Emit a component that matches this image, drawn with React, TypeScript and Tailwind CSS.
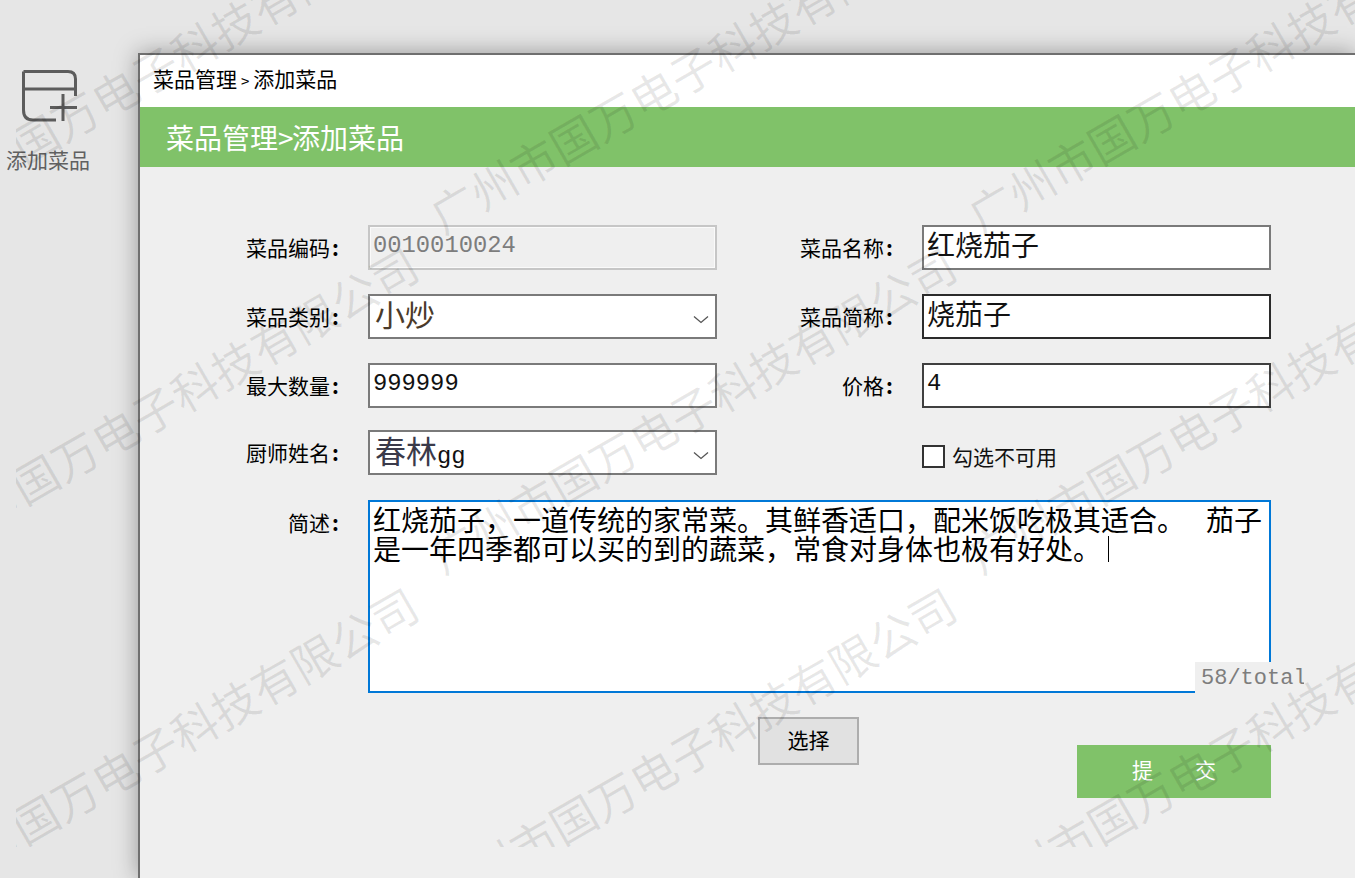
import type { ReactNode } from "react";

const watermarkRows = [-145, 195, 535, 875];
const watermarkCols = [-121, 417, 955];

function Watermark() {
  return (
    <div className="absolute left-[16px] top-0 z-50 h-[847px] w-[1339px] overflow-hidden pointer-events-none">
      {watermarkRows.map((top) =>
        watermarkCols.map((left) => (
          <div
            key={`${top}-${left}`}
            className="absolute origin-left -rotate-30 whitespace-nowrap text-[46px] leading-[46px] text-black/[0.09]"
            style={{ top, left }}
          >
            广州市国万电子科技有限公司
          </div>
        ))
      )}
    </div>
  );
}

function Mono({ children }: { children: ReactNode }) {
  return <div className="font-['Liberation_Mono',monospace] text-[23.8px] leading-[38px]">{children}</div>;
}

function Chevron() {
  return (
    <svg width="16" height="9" viewBox="0 0 16 9" fill="none" className="absolute right-[6px] top-[19px]">
      <path d="M1 1.5 L8 7.5 L15 1.5" stroke="#555" strokeWidth="1.3" />
    </svg>
  );
}

function Label({ children, width }: { children?: ReactNode; width: string }) {
  return (
    <div className={`${width} shrink-0 pr-[27px] pt-[4px] text-right text-[21px] leading-[36px] text-black`}>
      {children}
      {children && <span className="inline-block w-[11px] text-center font-bold">:</span>}
    </div>
  );
}

function Field({ children, border, select }: { children: ReactNode; border: string; select?: boolean }) {
  return (
    <div className={`relative h-[45px] w-[349px] shrink-0 overflow-hidden border-2 bg-white pl-[3px] text-[28px] leading-[35px] text-[#111] ${border}`}>
      {children}
      {select && <Chevron />}
    </div>
  );
}

export default function App() {
  return (
    <div className="relative flex h-[878px] w-[1355px] overflow-hidden bg-[#e6e6e6] font-['Noto_Sans_CJK_SC',sans-serif]">
      {/* left menu */}
      <div className="flex w-[138px] shrink-0 flex-col items-start pt-[68px]">
        <svg width="60" height="56" viewBox="0 0 60 56" fill="none" stroke="#5c5c5c" strokeWidth="3" className="ml-[20px]">
          <path d="M3.5 3.5 H48 Q55.5 3.5 55.5 11 V28" />
          <path d="M3.5 3.5 V42 Q3.5 52 13 52 H36" />
          <path d="M3.5 21 H55.5" />
          <path d="M30 39.5 H57" />
          <path d="M43 26 V53" />
        </svg>
        <div className="ml-[6px] mt-[20px] text-[21px] leading-[30px] text-[#606060]">添加菜品</div>
      </div>

      {/* dialog */}
      <div className="mt-[53px] flex min-w-0 flex-1 flex-col border-l-2 border-t-2 border-[#6f6f6f] bg-[#efefef] shadow-[0_0_22px_rgba(0,0,0,0.35)]">
        <div className="h-[52px] bg-white pl-[13px] pt-[8px] text-[21px] leading-[30px] text-black">
          菜品管理<span className="mx-[4px] text-[15px]">&gt;</span>添加菜品
        </div>
        <div className="h-[60px] bg-[#80c269] pl-[26px] pt-[10px] text-[28px] leading-[40px] text-white">
          菜品管理<span className="inline-block w-[14px]">&gt;</span>添加菜品
        </div>

        <div className="flex flex-col pt-[58px]">
          <div className="flex">
            <Label width="w-[228px]">菜品编码</Label>
            <div className="h-[45px] w-[349px] shrink-0 border-2 border-[#c6c6c6] bg-[#efefef] pl-[3px] text-[#7d7d7d] shadow-[inset_0_0_0_1px_#fafafa]">
              <Mono>0010010024</Mono>
            </div>
            <Label width="w-[205px]">菜品名称</Label>
            <Field border="border-[#7a7a7a]">红烧茄子</Field>
          </div>

          <div className="mt-[24px] flex">
            <Label width="w-[228px]">菜品类别</Label>
            <Field border="border-[#7a7a7a]" select>
              <span className="ml-[2px] text-[30px] text-[#4a3a2a]">小炒</span>
            </Field>
            <Label width="w-[205px]">菜品简称</Label>
            <Field border="border-[#2b2b2b]">烧茄子</Field>
          </div>

          <div className="mt-[24px] flex">
            <Label width="w-[228px]">最大数量</Label>
            <Field border="border-[#7a7a7a]">
              <Mono>999999</Mono>
            </Field>
            <Label width="w-[205px]">价格</Label>
            <Field border="border-[#404040]">
              <Mono>4</Mono>
            </Field>
          </div>

          <div className="mt-[22px] flex">
            <Label width="w-[228px]">厨师姓名</Label>
            <Field border="border-[#7a7a7a]" select>
              <span className="ml-[2px] text-[31px] text-[#3a3a4a]">春林</span>
              <span className="font-['Liberation_Mono',monospace] text-[23.8px]">gg</span>
            </Field>
            <Label width="w-[205px]" />
            <div className="flex items-center pt-[7px]">
              <div className="h-[23px] w-[23px] border-2 border-[#333] bg-white" />
              <span className="ml-[7px] text-[21px] leading-[30px] text-[#111]">勾选不可用</span>
            </div>
          </div>

          <div className="mt-[25px] flex">
            <Label width="w-[228px]">简述</Label>
            <div className="relative h-[193px] w-[903px] shrink-0 border-2 border-[#0078d7] bg-white pl-[3px] pt-[3px] text-[28px] leading-[29px] text-black">
              <div className="whitespace-nowrap">
                红烧茄子，一道传统的家常菜。其鲜香适口，配米饭吃极其适合。<span className="ml-[21px]">茄子</span>
              </div>
              <div className="flex items-center whitespace-nowrap">
                是一年四季都可以买的到的蔬菜，常食对身体也极有好处。
                <span className="ml-[7px] h-[26px] w-px bg-black" />
              </div>
              <div className="absolute -right-[35px] -bottom-[2px] h-[31px] w-[109px] overflow-hidden bg-[#efefef] pl-[6px] font-['Liberation_Mono',monospace] text-[22px] leading-[34px] whitespace-nowrap text-[#7d7d7d]">
                58/total
              </div>
            </div>
          </div>

          <div className="flex">
            <div className="ml-[618px] mt-[24px] flex h-[48px] w-[101px] items-center justify-center border-2 border-[#adadad] bg-[#e1e1e1] pb-[3px] text-[21px] text-black">
              选择
            </div>
            <div className="ml-[218px] mt-[52px] flex h-[53px] w-[194px] items-center justify-center bg-[#80c269] pb-[3px] text-[21px] whitespace-pre text-white">
              提　　交
            </div>
          </div>
        </div>
      </div>

      <Watermark />
    </div>
  );
}
